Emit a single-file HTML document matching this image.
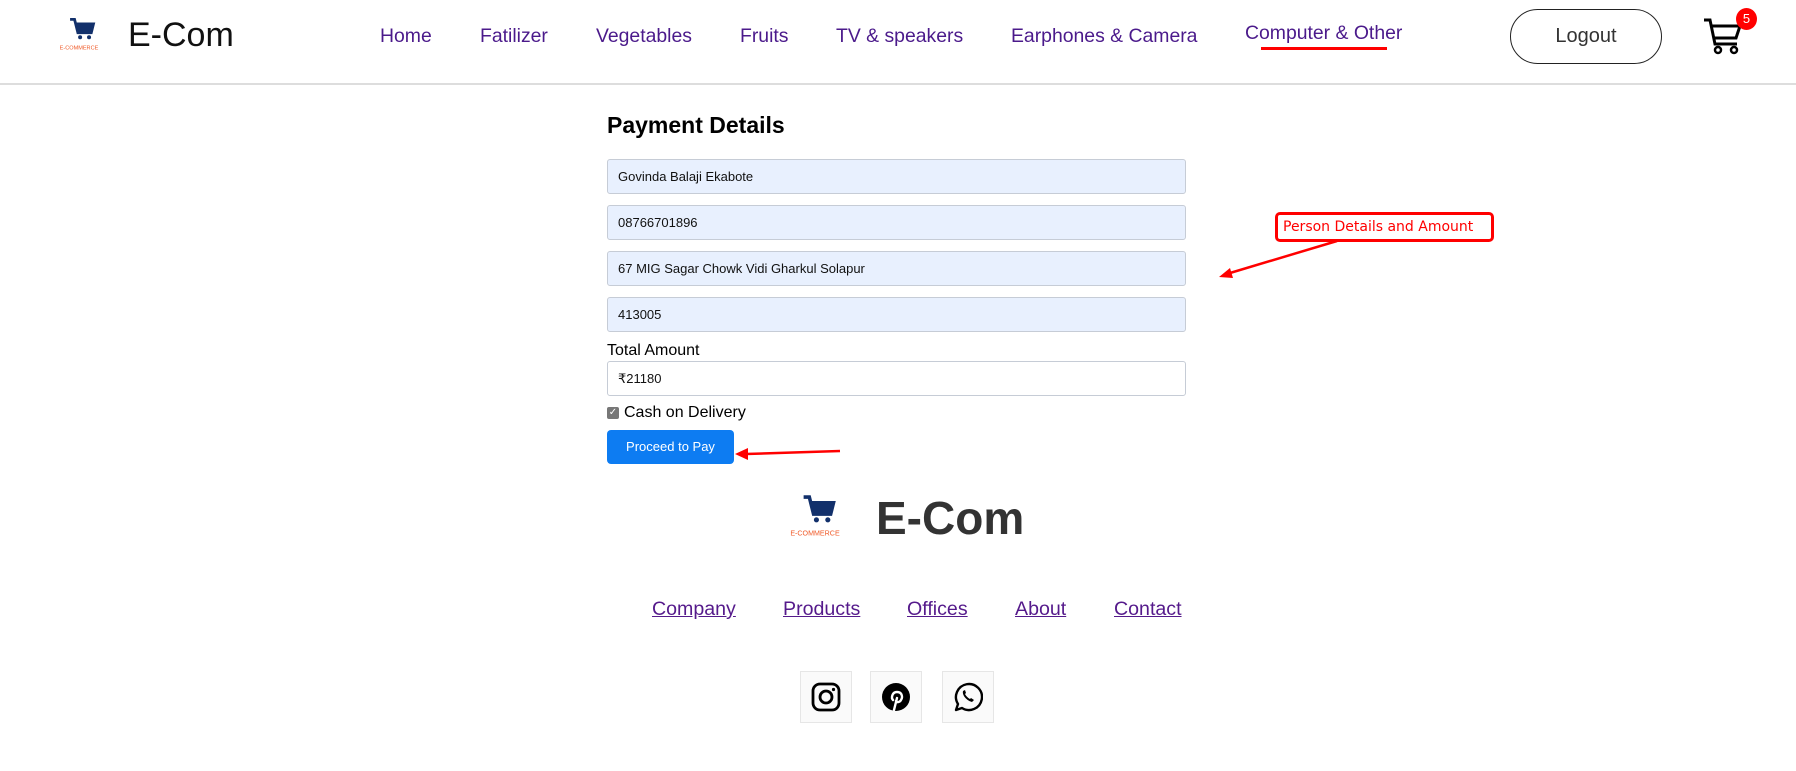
<!DOCTYPE html>
<html><head><meta charset="utf-8"><style>
*{margin:0;padding:0;box-sizing:border-box}
body{width:1796px;height:771px;background:#fff;font-family:"Liberation Sans",Arial,sans-serif;position:relative;overflow:hidden}
.a{position:absolute}
.nav{position:absolute;top:25px;font-size:19.4px;color:#4b1a8b;white-space:nowrap}
.inp{position:absolute;left:607px;width:579px;height:35px;background:#e8f0fe;border:1px solid #c6ccd6;border-radius:3px;font-size:13px;padding:0 10px;line-height:33px;color:#111}
.fl{position:absolute;top:598px;font-size:19.6px;color:#551a8b;text-decoration:underline}
.soc{position:absolute;top:671px;width:52px;height:52px;background:#fafafa;border:1px solid #e6e6e6;display:flex;align-items:center;justify-content:center}
</style></head><body>
<div class="a" style="left:0;top:83px;width:1796px;height:2px;background:#ddd"></div>
<svg class="a" style="left:50px;top:17px" width="58" height="36" viewBox="0 0 52 32">
<path d="M18 2h4l3 12h12l2-8H23" fill="none" stroke="#12306b" stroke-width="2.5"/><path d="M23 6h16l-2 8H25z" fill="#12306b"/>
<circle cx="27" cy="18" r="1.8" fill="#12306b"/><circle cx="35" cy="18" r="1.8" fill="#12306b"/>
<text x="26" y="29" font-size="5" fill="#f05a28" text-anchor="middle" font-family="Liberation Sans">E-COMMERCE</text></svg>
<div class="a" style="left:128px;top:16px;font-size:34px;color:#111">E-Com</div>
<div class="nav" style="left:380px">Home</div>
<div class="nav" style="left:480px">Fatilizer</div>
<div class="nav" style="left:596px">Vegetables</div>
<div class="nav" style="left:740px">Fruits</div>
<div class="nav" style="left:836px">TV &amp; speakers</div>
<div class="nav" style="left:1011px">Earphones &amp; Camera</div>
<div class="nav" style="left:1245px;top:22px">Computer &amp; Other</div>
<div class="a" style="left:1261px;top:47px;width:126px;height:3px;background:#f00"></div>
<div class="a" style="left:1510px;top:9px;width:152px;height:55px;border:1px solid #222;border-radius:28px;font-size:20px;color:#333;text-align:center;line-height:53px">Logout</div>
<svg class="a" style="left:1702px;top:16px" width="44" height="40" viewBox="0 0 44 40">
<path d="M2 4h6l5 24h22" fill="none" stroke="#000" stroke-width="3"/><path d="M9 10h29l-4 12H12" fill="none" stroke="#000" stroke-width="3"/>
<circle cx="16" cy="34" r="3" fill="none" stroke="#000" stroke-width="2.5"/><circle cx="32" cy="34" r="3" fill="none" stroke="#000" stroke-width="2.5"/></svg>
<div class="a" style="left:1736px;top:8px;width:21px;height:22px;border-radius:50%;background:#f00;color:#fff;font-size:13px;text-align:center;line-height:22px">5</div>
<div class="a" style="left:607px;top:112px;font-size:23px;font-weight:bold;color:#000">Payment Details</div>
<div class="inp" style="top:159px">Govinda Balaji Ekabote</div>
<div class="inp" style="top:205px">08766701896</div>
<div class="inp" style="top:251px">67 MIG Sagar Chowk Vidi Gharkul Solapur</div>
<div class="inp" style="top:297px">413005</div>
<div class="a" style="left:607px;top:342px;font-size:16px;color:#000">Total Amount</div>
<div class="inp" style="top:361px;background:#fff">₹21180</div>
<div class="a" style="left:607px;top:407px;width:12px;height:12px;background:#777;border-radius:2px;color:#fff;font-size:10px;line-height:12px;text-align:center">✓</div>
<div class="a" style="left:624px;top:404px;font-size:16px;color:#000">Cash on Delivery</div>
<div class="a" style="left:607px;top:430px;width:127px;height:34px;background:#0d7cf2;border-radius:4px;color:#fff;font-size:13px;text-align:center;line-height:34px">Proceed to Pay</div>
<svg class="a" style="left:0;top:0" width="1796" height="771">
<line x1="840" y1="451" x2="746" y2="454" stroke="#f00" stroke-width="2.5"/><path d="M735 454l13-6v12z" fill="#f00"/>
<line x1="1337" y1="241" x2="1230" y2="273" stroke="#f00" stroke-width="2.5"/><path d="M1219 277l11-9 3 10z" fill="#f00"/>
</svg>
<div class="a" style="left:1275px;top:212px;width:219px;height:30px;border:3px solid #f00;border-radius:5px;color:#f00;font-family:'DejaVu Sans',sans-serif;font-size:14px;line-height:24px;padding-left:5px">Person Details and Amount</div>
<svg class="a" style="left:778px;top:494px" width="74" height="46" viewBox="0 0 52 32">
<path d="M18 2h4l3 12h12l2-8H23" fill="none" stroke="#12306b" stroke-width="2.5"/><path d="M23 6h16l-2 8H25z" fill="#12306b"/>
<circle cx="27" cy="18" r="1.8" fill="#12306b"/><circle cx="35" cy="18" r="1.8" fill="#12306b"/>
<text x="26" y="29" font-size="5" fill="#f05a28" text-anchor="middle" font-family="Liberation Sans">E-COMMERCE</text></svg>
<div class="a" style="left:876px;top:491px;font-size:46px;font-weight:bold;color:#333">E-Com</div>
<div class="fl" style="left:652px">Company</div>
<div class="fl" style="left:783px">Products</div>
<div class="fl" style="left:907px">Offices</div>
<div class="fl" style="left:1015px">About</div>
<div class="fl" style="left:1114px">Contact</div>
<div class="soc" style="left:800px"><svg width="30" height="30" viewBox="0 0 30 30"><rect x="2" y="2" width="26" height="26" rx="7" fill="none" stroke="#000" stroke-width="2.8"/><circle cx="15" cy="15" r="6" fill="none" stroke="#000" stroke-width="2.8"/><circle cx="22.5" cy="7.5" r="1.6"/></svg></div>
<div class="soc" style="left:870px"><svg width="30" height="30" viewBox="0 0 30 30"><circle cx="15" cy="15" r="14"/><path d="M13 28l3-12M12 18c-2-2-1-8 4-8 5 0 6 5 4 8-1 2-4 3-5 1" fill="none" stroke="#fff" stroke-width="2.4" stroke-linecap="round"/></svg></div>
<div class="soc" style="left:942px"><svg width="30" height="30" viewBox="0 0 30 30"><path d="M3 28l2-6A13 13 0 1 1 9 26z" fill="none" stroke="#000" stroke-width="2.4" stroke-linejoin="round"/><path d="M10 9c-1 3 2 9 9 11l2-2-3-2-1 1c-2-1-4-3-5-5l1-1-1-3z"/></svg></div>
</body></html>
